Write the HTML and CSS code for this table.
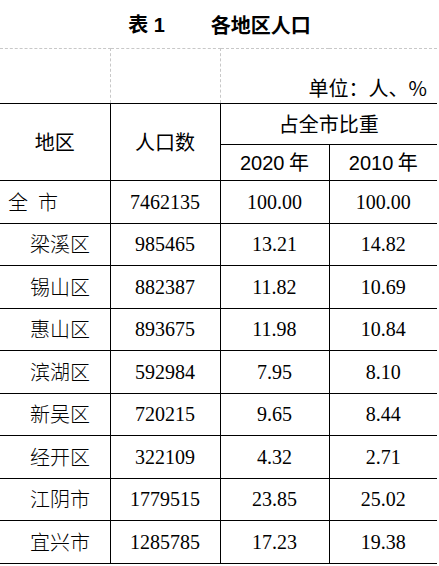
FILE: index.html
```html
<!DOCTYPE html>
<html lang="zh-CN">
<head>
<meta charset="utf-8">
<title>表1 各地区人口</title>
<link rel="stylesheet" href="styles.css">
</head>
<body>
<div class="page">
  <h1 class="title"><span class="title-no">表 1</span><span>各地区人口</span></h1>
  <table class="grid">
    <colgroup>
      <col class="c1"><col class="c2"><col class="c3"><col class="c4">
    </colgroup>
    <tr class="unit-row">
      <td class="blank"></td>
      <td class="blank"></td>
      <td class="unit" colspan="2">单位：人、%</td>
    </tr>
    <tr class="head1">
      <th rowspan="2">地区</th>
      <th rowspan="2">人口数</th>
      <th colspan="2">占全市比重</th>
    </tr>
    <tr class="head2">
      <th class="year"><span class="yr">2020</span> 年</th>
      <th class="year"><span class="yr">2010</span> 年</th>
    </tr>
    <tr class="row"><td class="name total">全&ensp;市</td><td class="num">7462135</td><td class="num">100.00</td><td class="num">100.00</td></tr>
    <tr class="row"><td class="name">梁溪区</td><td class="num">985465</td><td class="num">13.21</td><td class="num">14.82</td></tr>
    <tr class="row"><td class="name">锡山区</td><td class="num">882387</td><td class="num">11.82</td><td class="num">10.69</td></tr>
    <tr class="row"><td class="name">惠山区</td><td class="num">893675</td><td class="num">11.98</td><td class="num">10.84</td></tr>
    <tr class="row"><td class="name">滨湖区</td><td class="num">592984</td><td class="num">7.95</td><td class="num">8.10</td></tr>
    <tr class="row"><td class="name">新吴区</td><td class="num">720215</td><td class="num">9.65</td><td class="num">8.44</td></tr>
    <tr class="row"><td class="name">经开区</td><td class="num">322109</td><td class="num">4.32</td><td class="num">2.71</td></tr>
    <tr class="row"><td class="name">江阴市</td><td class="num">1779515</td><td class="num">23.85</td><td class="num">25.02</td></tr>
    <tr class="row"><td class="name">宜兴市</td><td class="num">1285785</td><td class="num">17.23</td><td class="num">19.38</td></tr>
  </table>
</div>
</body>
</html>
```

FILE: styles.css
```css
html, body {
  margin: 0;
  padding: 0;
  background: #fff;
}

body {
  font-family: "Noto Sans CJK SC", "Liberation Sans", sans-serif;
  color: #000;
}

.page {
  width: 439px;
}

.title {
  margin: 0;
  height: 48px;
  display: flex;
  justify-content: center;
  align-items: center;
  gap: 46px;
  font-size: 20px;
  font-weight: 700;
  line-height: 1;
  padding-top: 2px;
  box-sizing: border-box;
}

.title-no {
  font-family: "Liberation Sans", "Noto Sans CJK SC", sans-serif;
}

.grid {
  width: 437px;
  border-collapse: collapse;
  table-layout: fixed;
}

.c1 { width: 110px; }
.c2 { width: 110px; }
.c3 { width: 109px; }
.c4 { width: 108px; }

.grid td,
.grid th {
  border: 1px solid #000;
  padding: 0;
  vertical-align: middle;
  text-align: center;
  font-size: 20px;
  line-height: 24px;
}

.grid tr > :first-child { border-left: none; }
.grid tr > :last-child { border-right: none; }

.unit-row { height: 55px; }

.grid .unit-row td {
  border-top: 1px dashed #c8c8c8;
  border-left: none;
  border-right: none;
}

.grid .unit-row .blank {
  border-right: 1px dashed #c8c8c8;
}

.grid .unit-row .unit {
  text-align: right;
  vertical-align: bottom;
  padding: 0 10px 3px 0;
}

.grid th {
  font-weight: 400;
}

.head1 { height: 41px; }
.head2 { height: 36px; }

.yr {
  font-family: "Liberation Sans", sans-serif;
}

.row { height: 42.5px; }

.grid .name {
  text-align: left;
  padding-left: 30px;
  font-weight: 300;
}

.grid .total {
  padding-left: 8px;
}

.grid .num {
  font-family: "Liberation Serif", "Noto Sans CJK SC", serif;
}
```
